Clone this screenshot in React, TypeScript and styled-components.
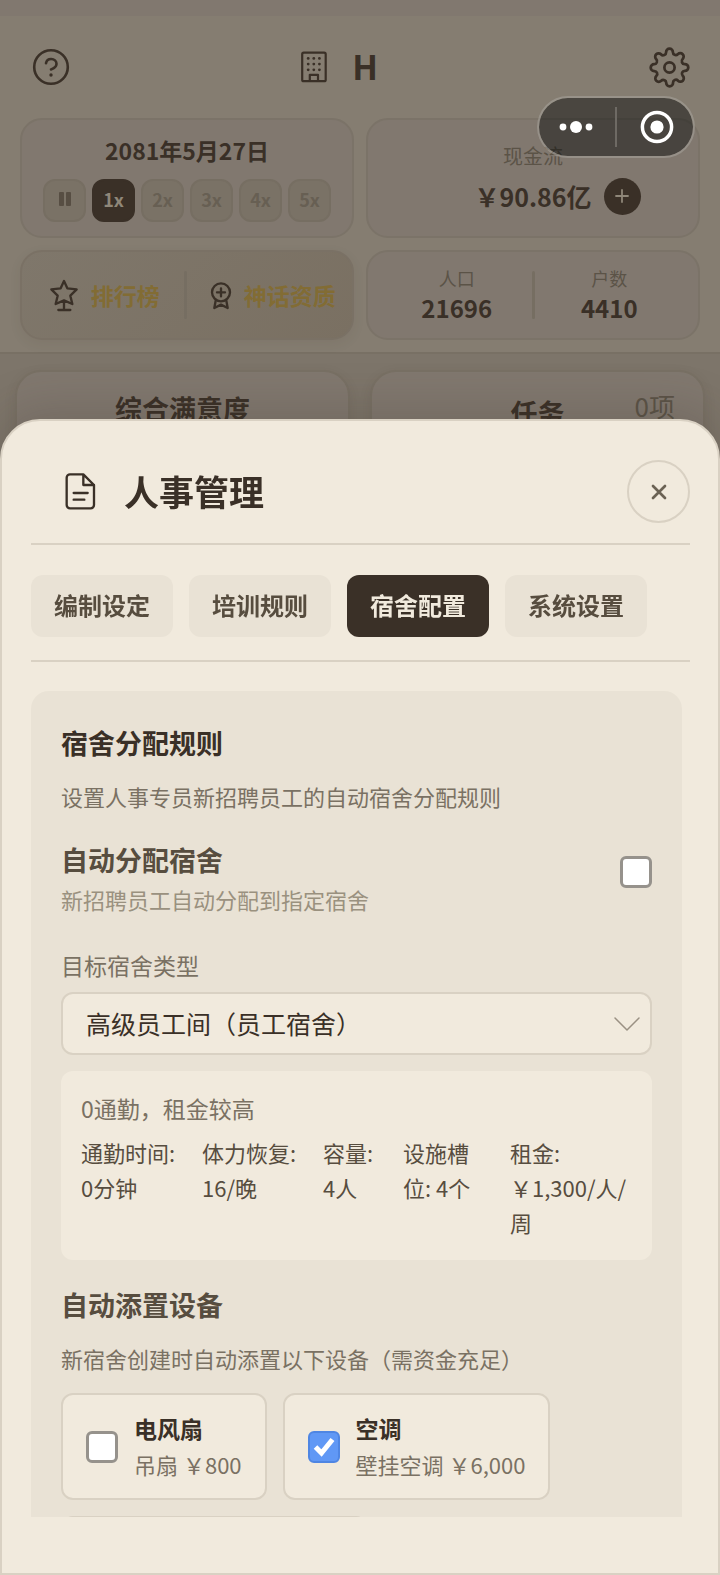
import React, { useState } from "react";
import styled, { createGlobalStyle } from "styled-components";

const color = {
  ink: "#3a3027",
  inkMid: "#574d3f",
  inkSoft: "#7a7163",
  inkFaint: "#9a917f",
  paper: "#f1eadd",
  panel: "#e9e2d5",
  line: "#d9d1c3",
  dimHeader: "#857d71",
  dimCard: "#81786f",
  dimPage: "#7d756a",
  dimLine: "#787064",
  dimText: "#5b5347",
  gold: "#826c34",
};

const GlobalStyle = createGlobalStyle`
  * { box-sizing: border-box; }
  body {
    margin: 0;
    background: ${color.dimPage};
    color: ${color.ink};
    font-family: "Noto Sans CJK SC", "Noto Sans", sans-serif;
  }
  h1, h2, h3, p { margin: 0; }
  button, select, input { font-family: inherit; margin: 0; }
`;

/* ---------- game screen behind the sheet ---------- */

const Screen = styled.div`
  height: 100vh;
  overflow: hidden;
  background: ${color.dimPage};
`;

const TopHeader = styled.header`
  padding: 0 20px 12px;
  border-top: 16px solid ${color.dimCard};
  border-bottom: 2px solid ${color.dimLine};
  background: ${color.dimHeader};
`;

const TitleRow = styled.div`
  display: grid;
  grid-template-columns: 1fr auto 1fr;
  align-items: center;
  height: 102px;
  padding: 0 10px;
`;

const IconButton = styled.button<{ $end?: boolean }>`
  display: flex;
  justify-self: ${(p) => (p.$end ? "end" : "start")};
  padding: 0;
  border: 0;
  background: none;
  color: ${color.ink};
`;

const Company = styled.h1`
  display: flex;
  align-items: center;
  gap: 22px;
  padding-right: 44px;
  font-size: 34px;
  line-height: 46px;
  font-weight: 700;
`;

const CompanyName = styled.span`
  padding-bottom: 2px;
`;

const CardGrid = styled.div`
  display: grid;
  grid-template-columns: 1fr 1fr;
  gap: 12px;
`;

const StatCard = styled.section<{ $tall?: boolean; $tinted?: boolean; $inset?: boolean }>`
  display: flex;
  flex-direction: ${(p) => (p.$tall ? "column" : "row")};
  align-items: center;
  justify-content: center;
  height: ${(p) => (p.$tall ? 120 : 90)}px;
  padding: 0 ${(p) => (p.$inset ? 14 : 0)}px;
  border: 2px solid ${(p) => (p.$tinted ? "#7a7165" : "#7b7368")};
  border-radius: 22px;
  background: ${(p) =>
    p.$tinted ? "linear-gradient(135deg, #7f776b, #7a7062)" : color.dimCard};
  box-shadow: ${(p) => (p.$tinted ? "0 4px 12px rgba(58, 48, 39, 0.08)" : "none")};
`;

const DateText = styled.div`
  font-size: 23px;
  line-height: 30px;
  font-weight: 700;
  margin-bottom: 14px;
`;

const SpeedRow = styled.div`
  display: flex;
  gap: 6px;
`;

const SpeedButton = styled.button<{ $active?: boolean }>`
  display: flex;
  align-items: center;
  justify-content: center;
  width: 43px;
  height: 43px;
  padding: 0 0 2px;
  border: 2px solid ${(p) => (p.$active ? color.ink : "#766e62")};
  border-radius: 12px;
  background: ${(p) => (p.$active ? color.ink : "#7a7266")};
  color: ${(p) => (p.$active ? "#8f8779" : "#675f53")};
  font-size: 18px;
  font-weight: 700;
`;

const CashLabel = styled.div`
  font-size: 20px;
  line-height: 28px;
  color: ${color.dimText};
  margin-bottom: 8px;
`;

const CashRow = styled.div`
  display: grid;
  grid-template-columns: 1fr auto 1fr;
  align-items: center;
  gap: 12px;
  width: 100%;
  font-size: 25px;
  line-height: 36px;
  font-weight: 700;
`;

const AddButton = styled.button`
  grid-column: 3;
  display: flex;
  align-items: center;
  justify-content: center;
  width: 37px;
  height: 37px;
  padding: 0;
  border: 0;
  border-radius: 50%;
  background: ${color.ink};
  color: #8f8779;
`;

const CashValue = styled.span`
  grid-column: 2;
`;

const LinkItem = styled.a<{ $inset?: boolean }>`
  flex: 1;
  display: flex;
  align-items: center;
  justify-content: center;
  gap: 11px;
  padding-left: ${(p) => (p.$inset ? 6 : 2)}px;
  color: ${color.gold};
  font-size: 23px;
  line-height: 34px;
  font-weight: 700;
  text-decoration: none;
  white-space: nowrap;

  svg { color: ${color.ink}; }
`;

const CardDivider = styled.span`
  width: 3px;
  height: 48px;
  border-radius: 2px;
  background: #766e62;
`;

const Count = styled.div`
  flex: 1;
  padding-bottom: 2px;
  text-align: center;
  font-size: 24px;
  line-height: 32px;
  font-weight: 700;
`;

const CountLabel = styled.div`
  font-size: 18px;
  line-height: 28px;
  font-weight: 400;
  color: ${color.dimText};
`;

const Overview = styled.div`
  display: grid;
  grid-template-columns: 1fr 1fr;
  gap: 20px;
  padding: 16px 15px;
`;

const OverviewCard = styled.section`
  position: relative;
  height: 160px;
  padding-top: 19px;
  border: 2px solid ${color.dimLine};
  border-radius: 26px;
  background: ${color.dimCard};
  box-shadow: 0 4px 12px rgba(58, 48, 39, 0.1);
  text-align: center;
`;

const OverviewTitle = styled.h2<{ $low?: boolean }>`
  padding-top: ${(p) => (p.$low ? 4 : 0)}px;
  font-size: 27px;
  line-height: 36px;
  font-weight: 700;
`;

const TaskCount = styled.span`
  position: absolute;
  top: 14px;
  right: 28px;
  font-size: 26px;
  line-height: 40px;
  color: ${color.dimText};
`;

/* ---------- floating capsule ---------- */

const Capsule = styled.div`
  position: fixed;
  top: 96px;
  right: 25px;
  z-index: 3;
  display: flex;
  align-items: center;
  width: 158px;
  height: 62px;
  border: 2px solid rgba(175, 172, 166, 0.45);
  border-radius: 31px;
  background: rgba(4, 6, 6, 0.46);
  background-clip: padding-box;
`;

const CapsuleButton = styled.button`
  flex: 1;
  display: flex;
  align-items: center;
  justify-content: center;
  padding: 0;
  border: 0;
  background: none;
  color: #ffffff;
`;

const CapsuleDivider = styled.span`
  width: 2px;
  height: 40px;
  margin: 0 3px;
  background: #6e6a64;
`;

/* ---------- bottom sheet ---------- */

const Overlay = styled.div`
  position: fixed;
  inset: 0;
  z-index: 2;
  display: flex;
  flex-direction: column;
  padding-top: 419px;
`;

const Sheet = styled.div`
  flex: 1;
  min-height: 0;
  display: flex;
  flex-direction: column;
  padding: 39px 28px 56px 29px;
  border: 2px solid ${color.line};
  border-radius: 40px 40px 0 0;
  background: ${color.paper};
  box-shadow: 0 -8px 48px rgba(58, 48, 39, 0.22);
`;

const SheetHeader = styled.div`
  display: flex;
  align-items: center;
  gap: 22px;
  padding: 0 0 20px 28px;
  border-bottom: 2px solid ${color.line};
`;

const SheetTitle = styled.h2`
  flex: 1;
  padding-bottom: 2px;
  font-size: 35px;
  line-height: 46px;
  font-weight: 700;
`;

const CloseButton = styled.button`
  display: flex;
  align-items: center;
  justify-content: center;
  width: 63px;
  height: 63px;
  padding: 0;
  border: 2px solid ${color.line};
  border-radius: 50%;
  background: none;
  color: #6b6254;
`;

const Tabs = styled.div`
  display: flex;
  gap: 16px;
  padding: 30px 0 23px;
  border-bottom: 2px solid ${color.line};
`;

const Tab = styled.button<{ $active?: boolean }>`
  height: 62px;
  padding: 0 23px 3px;
  border: 0;
  border-radius: 12px;
  background: ${(p) => (p.$active ? color.ink : color.panel)};
  color: ${(p) => (p.$active ? color.paper : color.inkMid)};
  font-size: 24px;
  font-weight: 700;
  white-space: nowrap;
`;

const ScrollArea = styled.div`
  flex: 1;
  min-height: 0;
  margin-top: 29px;
  padding-right: 8px;
  overflow-y: auto;
  scrollbar-width: none;
`;

const Panel = styled.div`
  padding: 30px;
  border-radius: 18px;
  background: ${color.panel};
`;

const SectionTitle = styled.h3<{ $soft?: boolean }>`
  font-size: 27px;
  line-height: 44px;
  font-weight: 700;
  color: ${(p) => (p.$soft ? color.inkMid : color.ink)};
`;

const Hint = styled.p`
  margin-top: 14px;
  font-size: 22px;
  line-height: 34px;
  color: ${color.inkSoft};
`;

const ToggleText = styled.span`
  display: flex;
  flex-direction: column;
`;

const ToggleTitle = styled.span`
  font-size: 27px;
  line-height: 44px;
  font-weight: 700;
  color: ${color.inkMid};
`;

const ToggleHint = styled.span`
  font-size: 22px;
  line-height: 34px;
  color: ${color.inkFaint};
`;

const CheckWrap = styled.span`
  display: grid;
  flex: none;
  width: 32px;
  height: 32px;

  & > * { grid-area: 1 / 1; }
  & > svg { pointer-events: none; color: #ffffff; }
`;

const ToggleRow = styled.label`
  display: flex;
  align-items: flex-start;
  justify-content: space-between;
  margin-top: 25px;

  & > ${CheckWrap} { margin-top: 18px; }
`;

const CheckInput = styled.input`
  appearance: none;
  width: 32px;
  height: 32px;
  border: 3px solid #96928c;
  border-radius: 6px;
  background: #ffffff;

  &:checked {
    border: 2px solid #4f86e3;
    background: #6098f5;
  }
`;

const FieldLabel = styled.label`
  display: block;
  margin: 32px 0 10px;
  font-size: 23px;
  line-height: 34px;
  color: ${color.inkSoft};
`;

const SelectWrap = styled.div`
  position: relative;

  svg {
    position: absolute;
    top: 24px;
    right: 12px;
    pointer-events: none;
    color: #9a9183;
  }
`;

const Select = styled.select`
  appearance: none;
  width: 100%;
  height: 63px;
  padding: 0 23px 2px;
  border: 2px solid ${color.line};
  border-radius: 12px;
  background: ${color.paper};
  color: ${color.ink};
  font-size: 25px;
`;

const InfoBox = styled.div`
  margin: 16px 0 23px;
  padding: 20px;
  border-radius: 12px;
  background: ${color.paper};
`;

const InfoText = styled.p`
  margin-bottom: 10px;
  font-size: 23px;
  line-height: 34px;
  color: ${color.inkSoft};
`;

const Facts = styled.div`
  display: grid;
  grid-template-columns: 101fr 101fr 60fr 87fr 122fr;
  column-gap: 20px;
  font-size: 22px;
  line-height: 35px;
  color: ${color.inkMid};
`;

const Devices = styled.div`
  display: flex;
  flex-wrap: wrap;
  gap: 16px;
  margin-top: 18px;
`;

const Device = styled.label`
  display: flex;
  align-items: center;
  gap: 16px;
  min-height: 107px;
  padding: 16px 23px;
  border: 2px solid ${color.line};
  border-radius: 12px;
  background: ${color.paper};
`;

const DeviceSlot = styled.div`
  flex: 0 0 52%;
  height: 107px;
  border: 2px solid ${color.line};
  border-radius: 12px;
  background: ${color.paper};
`;

const DeviceName = styled.span`
  display: block;
  font-size: 23px;
  line-height: 35px;
  font-weight: 700;
`;

const DevicePrice = styled.span`
  display: block;
  font-size: 22px;
  line-height: 36px;
  color: ${color.inkSoft};
`;

/* ---------- icons ---------- */

const stroke = {
  fill: "none",
  stroke: "currentColor",
  strokeLinecap: "round" as const,
  strokeLinejoin: "round" as const,
  "aria-hidden": true,
};

const HelpIcon = () => (
  <svg width="42" height="42" viewBox="0 0 42 42" strokeWidth="2.6" {...stroke}>
    <circle cx="21" cy="21" r="16.8" />
    <path d="M16 17.2C16.500 14.500 18.600 13 21.100 13C24.300 13 26.500 15 26.500 17.800C26.500 21.800 21 23.400 21 23.400" />
    <circle cx="21" cy="29" r="1.700" fill="currentColor" stroke="none" />
  </svg>
);

const BuildingIcon = () => (
  <svg width="32" height="36" viewBox="0 0 32 36" strokeWidth="2.2" {...stroke}>
    <rect x="4.200" y="3.700" width="23.500" height="28.500" rx="1.500" />
    <path d="M11.800 32v-6.200h8.200V32" />
    {[9.4, 15.1, 20.8].map((y) =>
      [10.2, 15.8, 21.4].map((x) => (
        <circle key={`${x}-${y}`} cx={x} cy={y} r="1.400" fill="currentColor" stroke="none" />
      ))
    )}
  </svg>
);

const GearIcon = () => (
  <svg width="41" height="41" viewBox="0 0 24 24" strokeWidth="1.6" {...stroke}>
    <circle cx="12" cy="12" r="3" />
    <path d="M19.4 15a1.65 1.65 0 0 0 .33 1.82l.06.06a2 2 0 0 1 0 2.83 2 2 0 0 1-2.83 0l-.06-.06a1.65 1.65 0 0 0-1.82-.33 1.65 1.65 0 0 0-1 1.51V21a2 2 0 0 1-2 2 2 2 0 0 1-2-2v-.09A1.65 1.65 0 0 0 9 19.4a1.65 1.65 0 0 0-1.82.33l-.06.06a2 2 0 0 1-2.83 0 2 2 0 0 1 0-2.83l.06-.06a1.65 1.65 0 0 0 .33-1.82 1.65 1.65 0 0 0-1.51-1H3a2 2 0 0 1-2-2 2 2 0 0 1 2-2h.09A1.65 1.65 0 0 0 4.6 9a1.65 1.65 0 0 0-.33-1.82l-.06-.06a2 2 0 0 1 0-2.83 2 2 0 0 1 2.83 0l.06.06a1.65 1.65 0 0 0 1.82.33H9a1.65 1.65 0 0 0 1-1.51V3a2 2 0 0 1 2-2 2 2 0 0 1 2 2v.09a1.65 1.65 0 0 0 1 1.51 1.65 1.65 0 0 0 1.82-.33l.06-.06a2 2 0 0 1 2.83 0 2 2 0 0 1 0 2.83l-.06.06a1.65 1.65 0 0 0-.33 1.82V9a1.65 1.65 0 0 0 1.51 1H21a2 2 0 0 1 2 2 2 2 0 0 1-2 2h-.09a1.65 1.65 0 0 0-1.51 1z" />
  </svg>
);

const PauseIcon = () => (
  <svg width="14" height="16" viewBox="0 0 14 16" fill="#574e43" aria-hidden>
    <rect x="1" y="1" width="5" height="14" rx="1" />
    <rect x="8" y="1" width="5" height="14" rx="1" />
  </svg>
);

const PlusIcon = () => (
  <svg width="16" height="16" viewBox="0 0 16 16" strokeWidth="1.8" {...stroke}>
    <path d="M8 2v12M2 8h12" />
  </svg>
);

const StarIcon = () => (
  <svg width="32" height="36" viewBox="0 0 96 108" strokeWidth="7" {...stroke}>
    <path d="M48 12L58 34L86 37L67 56L73 81L48 70L23 81L29 56L10 37L38 34ZM48 72V98M31 99H67" />
  </svg>
);

const MedalIcon = () => (
  <svg width="24" height="32" viewBox="0 0 72 96" strokeWidth="7" {...stroke}>
    <circle cx="36" cy="40" r="27" />
    <path d="M36 28V52M24 40H48M20 65L16 87L36 77L56 87L52 65" />
  </svg>
);

const DocumentIcon = () => (
  <svg width="43" height="43" viewBox="0 0 129 129" strokeWidth="7" {...stroke}>
    <path d="M32 13H73L105 45V105a10 10 0 0 1-10 10H33a10 10 0 0 1-10-10V23a10 10 0 0 1 10-10M73 13V45H105M44 69H86M44 89H76" />
  </svg>
);

const CloseIcon = () => (
  <svg width="18" height="18" viewBox="0 0 18 18" strokeWidth="2.7" {...stroke}>
    <path d="M3 3L15 15M15 3L3 15" />
  </svg>
);

const ChevronIcon = () => (
  <svg width="26" height="16" viewBox="0 0 26 16" strokeWidth="1.5" {...stroke}>
    <path d="M1 2L13 14L25 2" />
  </svg>
);

const DotsIcon = () => (
  <svg width="34" height="14" viewBox="0 0 34 14" fill="currentColor" aria-hidden>
    <circle cx="4" cy="7" r="3.400" />
    <circle cx="17" cy="7" r="6" />
    <circle cx="30" cy="7" r="3.400" />
  </svg>
);

const TargetIcon = () => (
  <svg width="34" height="34" viewBox="0 0 34 34" strokeWidth="3.500" {...stroke}>
    <circle cx="17" cy="17" r="14.600" />
    <circle cx="17" cy="17" r="6.600" fill="currentColor" stroke="none" />
  </svg>
);

interface CheckProps {
  checked: boolean;
  onChange: (next: boolean) => void;
}

const Check = ({ checked, onChange }: CheckProps) => (
  <CheckWrap>
    <CheckInput type="checkbox" checked={checked} onChange={(e) => onChange(e.target.checked)} />
    {checked && (
      <svg width="32" height="32" viewBox="0 0 32 32" fill="none" stroke="currentColor" strokeWidth="5" aria-hidden>
        <path d="M7.500 16L13.500 22L24.500 8.500" />
      </svg>
    )}
  </CheckWrap>
);

const tabNames = ["编制设定", "培训规则", "宿舍配置", "系统设置"];
const facts = ["通勤时间: 0分钟", "体力恢复: 16/晚", "容量: 4人", "设施槽位: 4个", "租金: ￥1,300/人/周"];
const devices = [
  { name: "电风扇", price: "吊扇 ￥800" },
  { name: "空调", price: "壁挂空调 ￥6,000" },
];

export default function App() {
  const [tab, setTab] = useState(2);
  const [speed, setSpeed] = useState(1);
  const [autoAssign, setAutoAssign] = useState(false);
  const [picked, setPicked] = useState([false, true]);

  return (
    <>
      <GlobalStyle />
      <Screen lang="zh-CN">
        <TopHeader>
          <TitleRow>
            <IconButton aria-label="帮助"><HelpIcon /></IconButton>
            <Company><BuildingIcon /><CompanyName>H</CompanyName></Company>
            <IconButton $end aria-label="设置"><GearIcon /></IconButton>
          </TitleRow>
          <CardGrid>
            <StatCard $tall>
              <DateText>2081年5月27日</DateText>
              <SpeedRow>
                <SpeedButton aria-label="暂停"><PauseIcon /></SpeedButton>
                {[1, 2, 3, 4, 5].map((n) => (
                  <SpeedButton key={n} $active={speed === n} onClick={() => setSpeed(n)}>{n}x</SpeedButton>
                ))}
              </SpeedRow>
            </StatCard>
            <StatCard $tall>
              <CashLabel>现金流</CashLabel>
              <CashRow>
                <CashValue>￥90.86亿</CashValue>
                <AddButton aria-label="增加"><PlusIcon /></AddButton>
              </CashRow>
            </StatCard>
            <StatCard $tinted>
              <LinkItem href="#rank"><StarIcon />排行榜</LinkItem>
              <CardDivider />
              <LinkItem href="#myth" $inset><MedalIcon />神话资质</LinkItem>
            </StatCard>
            <StatCard $inset>
              <Count><CountLabel>人口</CountLabel>21696</Count>
              <CardDivider />
              <Count><CountLabel>户数</CountLabel>4410</Count>
            </StatCard>
          </CardGrid>
        </TopHeader>
        <Overview>
          <OverviewCard><OverviewTitle>综合满意度</OverviewTitle></OverviewCard>
          <OverviewCard>
            <OverviewTitle $low>任务</OverviewTitle>
            <TaskCount>0项</TaskCount>
          </OverviewCard>
        </Overview>
      </Screen>

      <Capsule>
        <CapsuleButton aria-label="更多"><DotsIcon /></CapsuleButton>
        <CapsuleDivider />
        <CapsuleButton aria-label="关闭"><TargetIcon /></CapsuleButton>
      </Capsule>

      <Overlay lang="zh-CN">
        <Sheet role="dialog" aria-labelledby="sheet-title">
          <SheetHeader>
            <DocumentIcon />
            <SheetTitle id="sheet-title">人事管理</SheetTitle>
            <CloseButton aria-label="关闭"><CloseIcon /></CloseButton>
          </SheetHeader>
          <Tabs role="tablist">
            {tabNames.map((name, i) => (
              <Tab key={name} role="tab" aria-selected={tab === i} $active={tab === i} onClick={() => setTab(i)}>
                {name}
              </Tab>
            ))}
          </Tabs>
          <ScrollArea>
            <Panel>
              <SectionTitle>宿舍分配规则</SectionTitle>
              <Hint>设置人事专员新招聘员工的自动宿舍分配规则</Hint>
              <ToggleRow>
                <ToggleText>
                  <ToggleTitle>自动分配宿舍</ToggleTitle>
                  <ToggleHint>新招聘员工自动分配到指定宿舍</ToggleHint>
                </ToggleText>
                <Check checked={autoAssign} onChange={setAutoAssign} />
              </ToggleRow>
              <FieldLabel htmlFor="dorm-type">目标宿舍类型</FieldLabel>
              <SelectWrap>
                <Select id="dorm-type" defaultValue="senior">
                  <option value="senior">高级员工间（员工宿舍）</option>
                </Select>
                <ChevronIcon />
              </SelectWrap>
              <InfoBox>
                <InfoText>0通勤，租金较高</InfoText>
                <Facts>
                  {facts.map((fact) => <span key={fact}>{fact}</span>)}
                </Facts>
              </InfoBox>
              <SectionTitle $soft>自动添置设备</SectionTitle>
              <Hint>新宿舍创建时自动添置以下设备（需资金充足）</Hint>
              <Devices>
                {devices.map((device, i) => (
                  <Device key={device.name}>
                    <Check
                      checked={picked[i]}
                      onChange={(next) => setPicked(picked.map((v, j) => (j === i ? next : v)))}
                    />
                    <span>
                      <DeviceName>{device.name}</DeviceName>
                      <DevicePrice>{device.price}</DevicePrice>
                    </span>
                  </Device>
                ))}
                <DeviceSlot />
              </Devices>
            </Panel>
          </ScrollArea>
        </Sheet>
      </Overlay>
    </>
  );
}
